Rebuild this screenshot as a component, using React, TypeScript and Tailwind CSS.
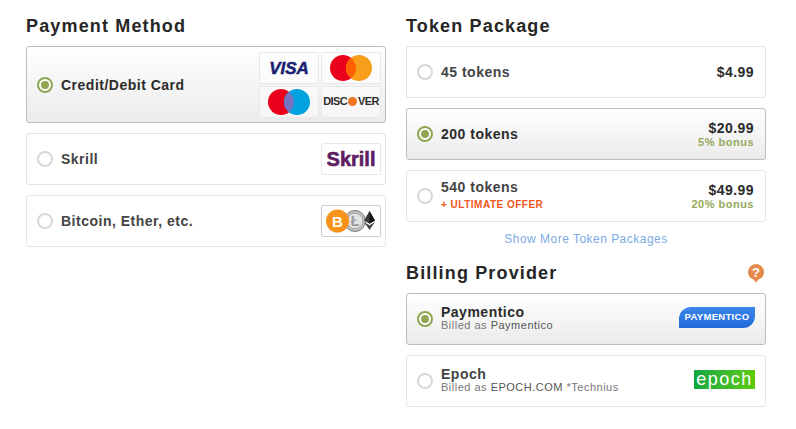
import type { ReactNode } from "react";

const Radio = ({ on }: { on?: boolean }) => (
  <span
    className={
      "flex h-4 w-4 shrink-0 items-center justify-center rounded-full border-2 bg-white " +
      (on ? "border-[#8fa652]" : "border-[#d8d8d8]")
    }
  >
    {on && <span className="h-2 w-2 rounded-full bg-[#8fa652]" />}
  </span>
);

const Card = ({
  on,
  height = "h-[52px]",
  children,
  right,
}: {
  on?: boolean;
  height?: string;
  children: ReactNode;
  right: ReactNode;
}) => (
  <div
    className={
      "flex items-center justify-between rounded-[3px] border pl-[10px] " +
      height +
      " " +
      (on
        ? "border-[#bdbdbd] bg-gradient-to-b from-white to-[#ebebeb] text-[#2b2b2b]"
        : "border-[#e3e3e3] bg-white text-[#444]")
    }
  >
    <div className="flex items-center gap-2">
      <Radio on={on} />
      {children}
    </div>
    {right}
  </div>
);

const Heading = ({ children }: { children: ReactNode }) => (
  <h2 className="text-[18px] leading-5 font-bold tracking-[1.15px] text-[#262626]">{children}</h2>
);

const Tile = ({ children, dark }: { children: ReactNode; dark?: boolean }) => (
  <div
    className={
      "flex h-8 w-[60px] items-center justify-center rounded-[2px] border " +
      (dark ? "border-[#ccc] bg-white" : "border-[#e8e8e8] bg-white/50")
    }
  >
    {children}
  </div>
);

const Price = ({ price, bonus }: { price: string; bonus?: string }) => (
  <div className={"pr-[11px] text-right font-bold " + (bonus ? "pt-[2px]" : "")}>
    <div className="text-[14px] leading-[15px] tracking-[0.45px] text-[#2b2b2b]">{price}</div>
    {bonus && <div className="text-[11px] leading-[13px] tracking-[0.5px] text-[#93a95a]">{bonus}</div>}
  </div>
);

const Visa = () => (
  <svg width="44" height="20" viewBox="0 0 44 20">
    <text
      x="22"
      y="16"
      textAnchor="middle"
      fontFamily="Liberation Sans"
      fontSize="17"
      fontWeight="700"
      fontStyle="italic"
      fill="#1a1f71"
      stroke="#1a1f71"
      strokeWidth="0.5"
    >
      VISA
    </text>
  </svg>
);

const Overlap = ({ a, b, mid }: { a: string; b: string; mid: string }) => (
  <svg width="42" height="26" viewBox="0 0 42 26">
    <circle cx="13" cy="13" r="13" fill={a} />
    <circle cx="29" cy="13" r="13" fill={b} />
    <path d="M21 2.8a13 13 0 0 1 0 20.4a13 13 0 0 1 0-20.4z" fill={mid} />
  </svg>
);

const Discover = () => (
  <div className="flex items-center text-[11px] font-bold tracking-[-0.6px] text-[#2e2e2e]">
    DISC
    <span className="mx-px h-[9px] w-[9px] rounded-full bg-[#ee7623]" />
    VER
  </div>
);

const Skrill = () => (
  <svg width="48" height="22" viewBox="0 0 48 22">
    <text
      x="24"
      y="18"
      textAnchor="middle"
      fontFamily="Liberation Sans"
      fontSize="20"
      fontWeight="700"
      fill="#5f1d63"
      stroke="#5f1d63"
      strokeWidth="0.6"
    >
      Skrill
    </text>
  </svg>
);

const Crypto = () => (
  <svg width="50" height="24" viewBox="0 0 50 24">
    <circle cx="29" cy="12" r="10.500" fill="#c4c4c4" stroke="#7b7b7b" />
    <circle cx="29" cy="12" r="8" fill="#e2e2e2" stroke="#a0a0a0" />
    <text x="29" y="17" textAnchor="middle" fontFamily="Liberation Sans" fontSize="14" fontWeight="700" fill="#9b9b9b">
      Ł
    </text>
    <path d="M43.500 2l5.500 9.500-5.500 3.300-5.500-3.300z" fill="#3c3c3d" />
    <path d="M43.500 2l5.500 9.500-5.500 3.300z" fill="#141414" />
    <path d="M38 13l5.500 3.300 5.500-3.300-5.500 8z" fill="#4a4a4a" />
    <circle cx="11.500" cy="12" r="11.500" fill="#f7931a" />
    <text x="11.500" y="17.500" textAnchor="middle" fontFamily="Liberation Sans" fontSize="15" fontWeight="700" fill="#fff">
      B
    </text>
  </svg>
);

const Paymentico = () => (
  <div className="mr-[10px] -mt-[3px] flex h-[21px] w-[76px] items-center justify-center rounded-tl-[12px] rounded-br-[12px] bg-gradient-to-b from-[#3b86ec] to-[#1f6ad8] text-[9.500px] font-bold tracking-[0.3px] text-white">
    PAYMENTICO
  </div>
);

const Epoch = () => (
  <div className="mr-[10px] -mt-[3px] flex h-[19px] w-[61px] items-center justify-center bg-gradient-to-r from-[#0aa83f] to-[#5ccb00] text-[18px] leading-[19px] tracking-[1.5px] text-white">
    <span className="-mt-px">epoch</span>
  </div>
);

const App = () => {
  return (
    <div className="flex h-[429px] w-[796px] gap-5 bg-white pt-4 pl-[26px] font-['Liberation_Sans',Arial,sans-serif]">
      <div className="flex w-[360px] flex-col">
        <Heading>Payment Method</Heading>
        <div className="mt-[10px] flex flex-col gap-[10px]">
          <Card
            on
            height="h-[77px]"
            right={
              <div className="mr-1 grid grid-cols-2 gap-[2px]">
                <Tile>
                  <Visa />
                </Tile>
                <Tile>
                  <Overlap a="#eb001b" b="#f79e1b" mid="#ff5f00" />
                </Tile>
                <Tile>
                  <Overlap a="#eb001b" b="#00a1df" mid="#7673c0" />
                </Tile>
                <Tile>
                  <Discover />
                </Tile>
              </div>
            }
          >
            <span className="pt-[2px] text-[14px] font-bold tracking-[0.5px]">Credit/Debit Card</span>
          </Card>
          <Card
            right={
              <div className="mr-1">
                <Tile>
                  <Skrill />
                </Tile>
              </div>
            }
          >
            <span className="text-[14px] font-bold tracking-[0.5px]">Skrill</span>
          </Card>
          <Card
            right={
              <div className="mr-1">
                <Tile dark>
                  <Crypto />
                </Tile>
              </div>
            }
          >
            <span className="text-[14px] font-bold tracking-[0.5px]">Bitcoin, Ether, etc.</span>
          </Card>
        </div>
      </div>

      <div className="flex w-[360px] flex-col">
        <Heading>Token Package</Heading>
        <div className="mt-[10px] flex flex-col gap-[10px]">
          <Card right={<Price price="$4.99" />}>
            <span className="text-[14px] font-bold tracking-[0.5px]">45 tokens</span>
          </Card>
          <Card on right={<Price price="$20.99" bonus="5% bonus" />}>
            <span className="text-[14px] font-bold tracking-[0.5px]">200 tokens</span>
          </Card>
          <Card right={<Price price="$49.99" bonus="20% bonus" />}>
            <div className="-mt-[3px]">
              <div className="text-[14px] leading-4 font-bold tracking-[0.5px]">540 tokens</div>
              <div className="mt-[3px] text-[10px] leading-[13px] font-bold tracking-[0.5px] text-[#f0561d]">
                + ULTIMATE OFFER
              </div>
            </div>
          </Card>
        </div>
        <div className="mt-2 text-center text-[12px] leading-[18px] tracking-[0.48px] text-[#7cabe6]">
          Show More Token Packages
        </div>
        <div className="mt-[15px] flex items-center justify-between">
          <Heading>Billing Provider</Heading>
          <svg className="mr-[2px]" width="16" height="19" viewBox="0 0 16 19">
            <path d="M8 0a8 8 0 0 1 2.500 15.600L8 18.500l-2.500-2.900A8 8 0 0 1 8 0z" fill="#e68a4c" />
            <text x="8" y="13" textAnchor="middle" fontFamily="Liberation Sans" fontSize="13" fontWeight="700" fill="#fff">
              ?
            </text>
          </svg>
        </div>
        <div className="mt-[10px] flex flex-col gap-[10px]">
          <Card on right={<Paymentico />}>
            <div className="-mt-[2px]">
              <div className="text-[14px] leading-[14px] font-bold tracking-[0.5px]">Paymentico</div>
              <div className="text-[11px] leading-[13px] tracking-[0.5px] text-[#777]">
                Billed as <span className="text-[#555]">Paymentico</span>
              </div>
            </div>
          </Card>
          <Card right={<Epoch />}>
            <div className="-mt-[2px]">
              <div className="text-[14px] leading-[14px] font-bold tracking-[0.5px]">Epoch</div>
              <div className="text-[11px] leading-[13px] tracking-[0.5px] text-[#777]">
                Billed as <span className="text-[#555]">EPOCH.COM</span> *Technius
              </div>
            </div>
          </Card>
        </div>
      </div>
    </div>
  );
};

export default App;
